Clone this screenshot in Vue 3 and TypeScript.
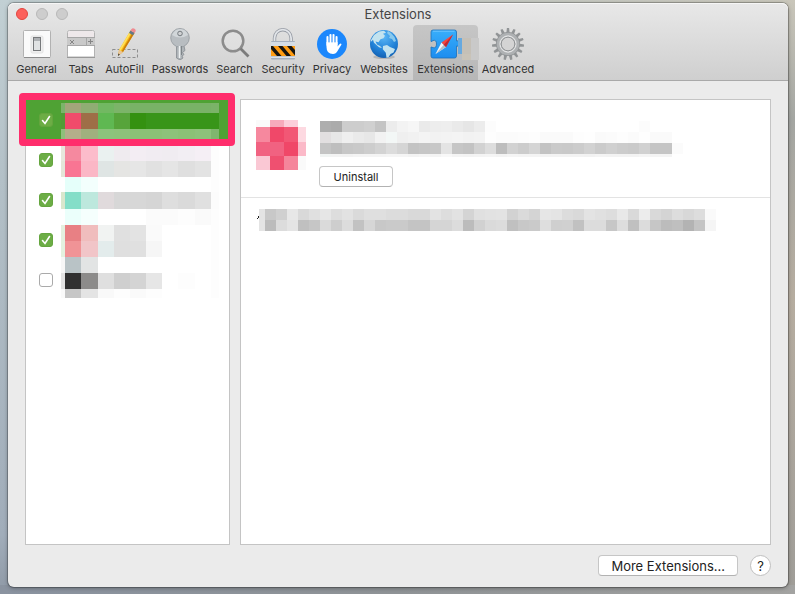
<script setup lang="ts">
import { ref } from 'vue'

interface Cell { x: number; y: number; w: number; h: number; fill: string }
interface Extension { id: number; enabled: boolean; cells: Cell[] }

// Two-digit tokens are greys, six-digit tokens are full colours, "-" leaves the cell empty.
function mosaic(xs: number[], ys: number[], rows: string[]): Cell[] {
  const cells: Cell[] = []
  rows.forEach((row, r) => {
    row.split(' ').forEach((token, c) => {
      if (token === '-' || xs[c + 1] === undefined) return
      cells.push({
        x: xs[c],
        y: ys[r],
        w: xs[c + 1] - xs[c],
        h: ys[r + 1] - ys[r],
        fill: '#' + (token.length === 2 ? token.repeat(3) : token),
      })
    })
  })
  return cells
}

const steps = (start: number, count: number, size: number): number[] =>
  Array.from({ length: count + 1 }, (_, i) => start + i * size)

const cols = [0, 4, 20, 37, 53, 69, 85, 101, 117, 134, 150, 158]

const extensions = ref<Extension[]>([
  { id: 1, enabled: true, cells: mosaic(cols, [3, 13, 29, 40], [
    '7bb46a a3a57b 90ad73 72b862 7cb469 79b267 79b267 79b267 79b267 79b267 7bb369',
    '529c36 f04b6b 9e6e47 5fb852 57a43b 349110 389519 389519 389519 389519 389519',
    '8fbf7b b4ae8a a0b07e 8cc37c 8dc27a 8bc176 8bc176 8dc27a 8bc176 8dc27a 7fb66e',
  ]) },
  { id: 2, enabled: true, cells: mosaic(cols, [6, 21, 37], [
    'e7e7dc f5899f fcbccb eaf1f0 efebef f3edf3 f1ecf2 f0ecf1 f2eef3 f5eff5 fd',
    'e4e6d8 f97593 fbb7c6 dfe5e4 e5e5e3 e6 e1 e5 df e3 fd',
  ]) },
  { id: 3, enabled: true, cells: mosaic(cols, [-3, 12, 29, 45], [
    '- e5fffa f3fffd - - - - - - - fd',
    'd9e7cd 84dec8 bde8dd e0dadc d7 d7 d5 de da e0 fc',
    '- ebfffb f5fffd - - - fb fb fd fa fd',
  ]) },
  { id: 4, enabled: true, cells: mosaic(cols, [5, 21, 37], [
    'e4f0df e88084 f0bdbd f1f3f2 e0 e3 fa - - - fd',
    'e4f1df f09396 f1c5c8 e3ecec df e0 f6 - - - fd',
  ]) },
  { id: 5, enabled: false, cells: mosaic(cols, [-3, 13, 29, 38], [
    'f7 b9c3c6 e2e4e4 - - - - - - - fd',
    'e2 30 8c8b8a df cf d4 e6 - fd - fd',
    'fa c6 e4 f9 fd fa fd - - - fd',
  ]) },
])

const iconCells = mosaic([0, 14, 28, 42, 50], [0, 7, 22, 36, 50], [
  'fa f7aabb fcceda -',
  'f6889e f04869 f25775 fdd9e1',
  'f16281 f16281 f04768 fbb9c8',
  'fac8d4 ef5070 f5859b fa',
])

const titleCells = mosaic(steps(0, 33, 11), [0, 11, 22, 33, 36], [
  'ae ab cd cd d0 c4 ec f3 f6 ea ed ee ea e6 ec fc - - - - - - - - - - - - - fc - -',
  'e2dfe0 e7 ef ea e7 f2 f3f7f6 ef f1 f4 f2 f3 f4 f2 f3 fd fb fb fc fd fa fa fa fd fe fa fb fd fb fe fa fa',
  'c4 be c7 c9 cd d3 dc d5 c3 c6 c8 e4 c6 c3 d2 dd bd d2 cc d5 c3 ca c9 cc d2 cb d0 cc ca d1 c5 c5 fb',
  'f1f4f3 f3 f2 f4 f4 f4 f5 f5 f3 f5 f4 f8 f4 f3 f4 f5 f3 f5 f4 f4 f3 f3 f3 f3 f2 f4 f3 f3 f3 f5 f4 f4',
])

const summaryCells = mosaic([0, ...steps(6, 41, 11)], [0, 11, 22], [
  'e4 c8 d0 e7 d9 e0 e6 dd e2 da df df dc dc d9 d9 e3 dd e2 d4 e0 e2 e3 d2 da d4 e6 e4 dc d9 e3 e0 dd e8 d9 ec d9 d4 dd d8 dd fa',
  'e4 bc dc e4 c0 c6 da ce dc c2 d6 c8 ca ca c4 c4 d5 d5 dc bc d1 da dc c0 c8 ca de cf d0 c1 dc dc c7 dd c0 dc c6 bc bf b3 c4 f5',
])

const tabs = ['General', 'Tabs', 'AutoFill', 'Passwords', 'Search', 'Security', 'Privacy', 'Websites', 'Extensions', 'Advanced']
const active = ref('Extensions')
const selected = ref(1)
const teeth = steps(0, 14, 24)
</script>

<template>
  <div class="desktop">
    <main class="window">
      <header class="chrome">
        <div class="titlebar">
          <div class="lights">
            <button class="light close" aria-label="Close"></button>
            <button class="light" aria-label="Minimize"></button>
            <button class="light" aria-label="Zoom"></button>
          </div>
          <h1>Extensions</h1>
        </div>
        <nav class="toolbar">
          <button v-for="tab in tabs" :key="tab" class="tab" :class="{ active: active === tab }" @click="active = tab">
            <svg class="tab-icon" viewBox="0 0 32 32" aria-hidden="true">
              <template v-if="tab === 'General'">
                <rect x="2.5" y="2.5" width="27" height="27" rx="1" fill="#fafafa" stroke="#b2b2b2" />
                <path d="M3 29.5h26" stroke="#8d8d8d" />
                <rect x="10" y="8" width="12" height="17" rx="1.5" fill="#efefef" stroke="#e2e2e2" />
                <rect x="12.5" y="9.5" width="7" height="13" fill="#aeb1b4" stroke="#77797b" />
                <path d="M13 13h6v9h-6z" fill="#e0e2e3" />
              </template>
              <template v-else-if="tab === 'Tabs'">
                <path d="M2.500 29V4.500a2 2 0 0 1 2-2h23a2 2 0 0 1 2 2V29z" fill="#fff" stroke="#b2b2b2" />
                <path d="M3 9V5q0-2 2-2h22q2 0 2 2v4z" fill="#eee8ea" />
                <path d="M2 9.500h28v8H2z" fill="#c9c9c9" />
                <path d="M2 9.500h28M2 17.500h28M21.500 10v7" stroke="#a6a6a6" />
                <path d="m5 12 4 4m0-4-4 4M23 13.500h5M25.500 11v5" stroke="#858585" />
                <path d="M2 29.500h28" stroke="#999" />
              </template>
              <template v-else-if="tab === 'AutoFill'">
                <rect x="3.500" y="21.500" width="25" height="8" fill="none" stroke="#8e8e8e" stroke-dasharray="3 2" />
                <path d="m9 28 1-6L21.500 2.500l4 2.500L14 24z" fill="#f7ba16" />
                <path d="m10 22 11.500-19.500 1.500 1L11.500 23z" fill="#ffe05b" />
                <path d="m12.500 23.500 11.500-19.500 1.500 1L14 24z" fill="#c97c0d" />
                <path d="m9 28 1-6 4 2z" fill="#e8c49a" />
                <path d="m9 28 .4-2.500 1.500.9z" fill="#333" />
                <path d="m20 5 1.500-2.500 4 2.300L24 7.300z" fill="#65798a" />
                <path d="m21.500 2.500.8-1.300q1.500-1.500 3.200-.4 1.700 1 1 2.700l-1 1.500z" fill="#ef8b91" />
              </template>
              <template v-else-if="tab === 'Passwords'">
                <path d="M12.500 17.500 12.500 30l3.500 2 3-2-1-2 2-1.500-1.500-2 2.500-2-1-4.500z" fill="#afb4b8" stroke="#858b90" stroke-width=".8" />
                <circle cx="16" cy="9.800" r="9.300" fill="#b8bdc1" stroke="#92989d" stroke-width=".8" />
                <path d="M8 7q3-6 8-6 6 0 8 6-8 5-16 0" fill="#d1d6d9" />
                <circle cx="16" cy="5.500" r="2.300" fill="#cfd1d3" stroke="#757b80" />
                <path d="M15.500 18v12" stroke="#edf0f1" stroke-width="1.500" />
                <path d="M17.500 18v9" stroke="#7e8589" />
              </template>
              <template v-else-if="tab === 'Search'">
                <circle cx="14" cy="13" r="10.300" fill="#e4e4e4" fill-opacity=".5" stroke="#8c8c8c" stroke-width="2.500" />
                <path d="m21.500 20.500 8 8" stroke="#7c7c7c" stroke-width="2.800" />
              </template>
              <template v-else-if="tab === 'Security'">
                <path d="M7.500 14v-4a8.300 8.300 0 0 1 16.600 0v4" fill="none" stroke="#969ba4" stroke-width="3.400" />
                <path d="M7.500 14v-4a8.300 8.300 0 0 1 16.600 0v4" fill="none" stroke="#e2e5e9" stroke-width="1.800" />
                <rect x="4" y="13" width="24" height="18.500" rx="1" fill="#a5b0bf" />
                <path d="M4 14h24v4H4z" fill="#d5dde6" />
                <path d="M4 18h24v10H4z" fill="#ff9c13" />
                <path d="M4 18h2l8.500 10H10L4 21zm7 0h4.500L24 28h-4.500zm9 0h4.500l3.500 4v5.500z" fill="#171512" />
                <path d="M4 28.500h24v1.500H4z" fill="#dbe1e8" />
              </template>
              <template v-else-if="tab === 'Privacy'">
                <circle cx="16" cy="16" r="15" fill="#1b87fc" />
                <path d="M11.500 17V9M14.500 15V7M17.500 15V7M20.500 17V9" stroke="#fff" stroke-width="2.100" stroke-linecap="round" />
                <path d="M10.500 14h11v4.500l2.200-2.600q1.500-.9 1.800.7l-4 6.400q-1.500 3-4.500 3-6.500 0-6.500-7z" fill="#fff" />
                <path d="M13 8v7M16 7v8M19 8v7" stroke="#4da1fb" stroke-width=".5" />
              </template>
              <template v-else-if="tab === 'Websites'">
                <defs>
                  <radialGradient id="ocean" cx=".5" cy=".25" r=".75">
                    <stop offset="0" stop-color="#59b6f6" /><stop offset=".65" stop-color="#2080d6" /><stop offset="1" stop-color="#1361b2" />
                  </radialGradient>
                </defs>
                <ellipse cx="16" cy="29" rx="11" ry="2" fill="#777" opacity=".35" />
                <circle cx="16" cy="16" r="14" fill="url(#ocean)" />
                <path d="m3 12 3-5 5-3.500 5-.8 2 2-3 1 2 2-1.500 2.500-3 1-2 3-3-.8 1.500 3 3 1.500 2 2-3-.7-5-4.500-1-3-2 2z" fill="#c3e3ef" />
                <path d="m15 18 4-1 3 2 5 2-1.500 3.500-3 1.500-2 3.300-2 .4-.7-5-3-3.500z" fill="#c1e2ef" />
                <path d="m20 3 3 2 3.500 4 1.500 4-2 1-2-3-3-1 1-2-3-3z" fill="#89c9ed" />
              </template>
              <template v-else-if="tab === 'Extensions'">
                <defs>
                  <linearGradient id="tile" x2="0" y2="1">
                    <stop offset="0" stop-color="#38aefa" /><stop offset="1" stop-color="#1d8df0" />
                  </linearGradient>
                </defs>
                <path d="M1 4q0-2 2-2h21.500q2 0 2 2v9q1.500 0 2.500-1 2.500-.5 2.500 3.500T29 19q-1-1-2.500-1v10q0 2-2 2H3q-2 0-2-2v-9q1 0 2 .7 3.500.8 3.500-3.700T3 12.500q-1 1-2 1z" fill="url(#tile)" stroke="#1d6fb8" stroke-width=".8" />
                <path d="M3 3.200h21.500" stroke="#7fcbff" stroke-width=".8" />
                <path d="m5.500 26 6-11.500 4.500 4.500z" fill="#f3f5f7" />
                <path d="m5.500 26 8.300-9.200 2.200 2.200z" fill="#b0bfc9" />
                <path d="M23 6.500 11.500 14.500l4.500 4.500z" fill="#f5463f" />
                <path d="M23 6.500 13.800 16.800 16 19z" fill="#bf2934" />
              </template>
              <template v-else>
                <g fill="#919496">
                  <path v-for="angle in teeth" :key="angle" d="m14.300 5.500.6-5.500h2.200l.6 5.500z" :transform="`rotate(${angle} 16 16)`" />
                </g>
                <circle cx="16" cy="16" r="9.500" fill="none" stroke="#8f9294" stroke-width="5" />
                <circle cx="16" cy="16" r="9.800" fill="none" stroke="#aeb1b3" stroke-width="3" />
                <circle cx="16" cy="16" r="8" fill="none" stroke="#e3e4e5" stroke-width="1.300" />
                <circle cx="16" cy="16" r="6.800" fill="#d4d4d4" stroke="#8f9294" stroke-width="1" />
              </template>
            </svg>
            <svg v-if="tab === 'Extensions'" class="patch" viewBox="0 0 21 22" shape-rendering="crispEdges" aria-hidden="true">
              <path d="M0 0h4v16H0z" fill="#67a9df" />
              <path d="M4 0h9v16H4z" fill="#c5c0b7" /><path d="M13 0h8v22h-8z" fill="#c9c9c9" />
              <path d="M0 16h4v6H0z" fill="#b9bdc2" /><path d="M4 16h9v6H4z" fill="#c9c3b8" />
            </svg>
            <span>{{ tab }}</span>
          </button>
        </nav>
      </header>

      <div class="panes">
        <ul class="list">
          <li v-for="ext in extensions" :key="ext.id" class="row" :class="{ selected: selected === ext.id }" @click="selected = ext.id">
            <input v-model="ext.enabled" type="checkbox" :aria-label="`Enable extension ${ext.id}`" @click.stop />
            <svg class="cells row-cells" viewBox="0 0 158 40" aria-hidden="true">
              <rect v-for="(c, i) in ext.cells" :key="i" :x="c.x" :y="c.y" :width="c.w" :height="c.h" :fill="c.fill" />
            </svg>
          </li>
          <li class="callout" aria-hidden="true"></li>
        </ul>

        <section class="detail">
          <div class="about">
            <svg class="cells icon-cells" viewBox="0 0 50 50" aria-hidden="true">
              <rect v-for="(c, i) in iconCells" :key="i" :x="c.x" :y="c.y" :width="c.w" :height="c.h" :fill="c.fill" />
            </svg>
            <div class="info">
              <svg class="cells title-cells" viewBox="0 0 363 36" aria-hidden="true">
                <rect v-for="(c, i) in titleCells" :key="i" :x="c.x" :y="c.y" :width="c.w" :height="c.h" :fill="c.fill" />
              </svg>
              <button class="push small">Uninstall</button>
            </div>
          </div>
          <div class="summary">
            <svg class="cells summary-cells" viewBox="-2 0 459 22" aria-hidden="true">
              <path d="M-2 10 0 6v2l-1 2z" fill="#222" />
              <rect v-for="(c, i) in summaryCells" :key="i" :x="c.x" :y="c.y" :width="c.w" :height="c.h" :fill="c.fill" />
            </svg>
          </div>
        </section>
      </div>

      <footer class="actions">
        <button class="push">More Extensions…</button>
        <button class="help" aria-label="Help">?</button>
      </footer>
    </main>
  </div>
</template>

<style>
body { margin: 0; }
</style>

<style scoped>
* { box-sizing: border-box; }
button { font-family: inherit; cursor: default; }

.desktop {
  display: flex;
  min-height: 100vh;
  padding: 3px 7px 7px 8px;
  font-family: Inter, "Liberation Sans", sans-serif;
  color: #333;
  background:
    linear-gradient(90deg, #8a93a0, #8f9396 50%, #a3a3a1) bottom / 100% 9px no-repeat,
    linear-gradient(#c9c6ba, #a4a6a2 20%, #b6ada0 50%, #9f9d98) right / 9px 100% no-repeat,
    linear-gradient(#c2d0d4, #b3c0c7 30%, #a1adba 90%, #8f99a6) left / 9px 100% no-repeat,
    linear-gradient(90deg, #bfcdd0, #c9c7bb);
}

.window {
  flex: 1;
  display: flex;
  flex-direction: column;
  border-radius: 6px;
  background: #ebebeb;
  box-shadow: 0 0 0 1px rgba(0, 0, 0, 0.22), 0 1px 4px rgba(0, 0, 0, 0.35);
}

.chrome {
  border-bottom: 1px solid #a9a9a9;
  border-radius: 6px 6px 0 0;
  background: linear-gradient(#e8e8e8, #cfcfcf);
  box-shadow: inset 0 1px #f6f6f6;
}

.titlebar {
  display: grid;
  grid-template-columns: 1fr auto 1fr;
  align-items: center;
  height: 22px;
}

.lights { display: flex; gap: 8px; padding-left: 8px; }

.light {
  width: 12px;
  height: 12px;
  padding: 0;
  border: 1px solid #b8b8b8;
  border-radius: 50%;
  background: #cdcdcd;
}
.light.close { border-color: #e2463f; background: #fc605b; }

h1 { margin: 0; font-size: 13px; line-height: 22px; font-weight: 400; color: #454545; }

.toolbar {
  display: grid;
  grid-template-columns: 49px 40px 47px 64px 45px 52px 46px 58px 65px 60px;
  padding-left: 4px;
}

.tab {
  position: relative;
  display: flex;
  flex-direction: column;
  align-items: center;
  height: 55px;
  padding: 3px 0 0;
  border: 0;
  border-radius: 4px 4px 0 0;
  background: none;
  font-size: 11px;
  line-height: 18px;
  color: #333;
}
.tab.active { background: linear-gradient(#c6c6c6, #b7b7b7); }
.tab-icon { width: 32px; height: 32px; }
.patch { position: absolute; top: 13px; right: -1px; width: 21px; height: 22px; }

.panes {
  flex: 1;
  display: grid;
  grid-template-columns: 205px 1fr;
  gap: 10px;
  padding: 18px 17px 0;
}

.list {
  position: relative;
  margin: 0;
  padding: 0;
  list-style: none;
  border: 1px solid #c4c4c4;
  background: #fff;
}

.row { display: flex; align-items: center; gap: 8px; height: 40px; padding-left: 13px; }
.row.selected { background: #4fa234; }

input[type="checkbox"] {
  appearance: none;
  width: 14px;
  height: 14px;
  margin: 0;
  border: 1px solid #aaa;
  border-radius: 3px;
  background: #fff;
}
input[type="checkbox"]:checked {
  border-color: #65a53f;
  background: #6cad45 url("data:image/svg+xml,%3Csvg xmlns='http://www.w3.org/2000/svg' viewBox='0 0 12 12'%3E%3Cpath d='M2.500 6.500 5 9.500 9.500 2.500' fill='none' stroke='white' stroke-width='1.600' stroke-linecap='round'/%3E%3C/svg%3E") center / 12px 12px;
}

.cells { display: block; overflow: visible; shape-rendering: crispEdges; }
.row-cells { width: 158px; height: 40px; }

.callout {
  position: absolute;
  top: -7px;
  left: -7px;
  right: -6px;
  height: 53px;
  border: 7px solid #ff2d6c;
  border-radius: 4px;
  pointer-events: none;
}

.detail { border: 1px solid #c4c4c4; background: #fff; }

.about {
  display: flex;
  gap: 13px;
  height: 98px;
  padding: 20px 15px 0;
  border-bottom: 1px solid #e3e3e3;
}
.icon-cells { width: 50px; height: 50px; }
.info { display: flex; flex-direction: column; align-items: flex-start; gap: 9px; padding-top: 1px; }
.title-cells { width: 363px; height: 36px; margin-left: 1px; }

.summary { padding: 11px 16px; }
.summary-cells { width: 459px; height: 22px; }

.push {
  min-width: 74px;
  height: 21px;
  padding: 0 12px;
  border: 1px solid #c6c6c6;
  border-bottom-color: #b2b2b2;
  border-radius: 4px;
  background: #fff;
  font-size: 13px;
  line-height: 18px;
  color: #222;
}
.push.small { font-size: 11px; }

.actions {
  display: flex;
  justify-content: flex-end;
  gap: 12px;
  padding: 10px 17px 11px;
}

.help {
  width: 21px;
  height: 21px;
  padding: 0;
  border: 1px solid #bfbfbf;
  border-radius: 50%;
  background: #fff;
  font-size: 13px;
  line-height: 18px;
  color: #222;
}
</style>
